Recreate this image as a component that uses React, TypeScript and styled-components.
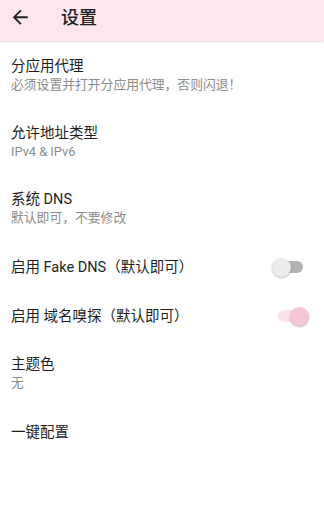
import React, { useState } from 'react';
import styled, { createGlobalStyle } from 'styled-components';

const GlobalStyle = createGlobalStyle`
  html, body {
    margin: 0;
    padding: 0;
    background: #ffffff;
  }
  body {
    font-family: Roboto, "Noto Sans CJK SC", "Noto Sans", sans-serif;
    -webkit-font-smoothing: antialiased;
  }
`;

interface Pref {
  id: string;
  title: string;
  summary?: string;
  toggle?: boolean;
}

const prefs: Pref[] = [
  { id: 'perapp', title: '分应用代理', summary: '必须设置并打开分应用代理，否则闪退！' },
  { id: 'addr', title: '允许地址类型', summary: 'IPv4 & IPv6' },
  { id: 'dns', title: '系统 DNS', summary: '默认即可，不要修改' },
  { id: 'fakedns', title: '启用 Fake DNS（默认即可）', toggle: true },
  { id: 'sniff', title: '启用 域名嗅探（默认即可）', toggle: true },
  { id: 'theme', title: '主题色', summary: '无' },
  { id: 'oneclick', title: '一键配置' },
];

const App: React.FC = () => {
  const [checked, setChecked] = useState<Record<string, boolean>>({
    fakedns: false,
    sniff: true,
  });

  const flip = (id: string) => setChecked((c) => ({ ...c, [id]: !c[id] }));

  return (
    <>
      <GlobalStyle />
      <Screen>
        <Toolbar>
          <BackButton aria-label="back">
            <svg width="22.5" height="22.5" viewBox="0 0 24 24">
              <path
                fill="#1f1f1f"
                d="M20 11H7.83l5.59-5.59L12 4l-8 8 8 8 1.41-1.41L7.83 13H20v-2z"
              />
            </svg>
          </BackButton>
          <ToolbarTitle>设置</ToolbarTitle>
        </Toolbar>

        <List>
          {prefs.map((p) =>
            p.toggle ? (
              <SwitchRow key={p.id} onClick={() => flip(p.id)}>
                <Title>{p.title}</Title>
                <Switch $on={!!checked[p.id]}>
                  <Track $on={!!checked[p.id]} />
                  <Thumb $on={!!checked[p.id]} />
                </Switch>
              </SwitchRow>
            ) : p.summary ? (
              <Row key={p.id}>
                <Title>{p.title}</Title>
                <Summary>{p.summary}</Summary>
              </Row>
            ) : (
              <SingleRow key={p.id}>
                <Title>{p.title}</Title>
              </SingleRow>
            )
          )}
        </List>
      </Screen>
    </>
  );
};

export default App;

const Screen = styled.div`
  width: 324px;
  min-height: 507px;
  background: #ffffff;
`;

const Toolbar = styled.header`
  height: 41px;
  box-sizing: border-box;
  padding: 0 0 6px 9px;
  display: flex;
  align-items: center;
  background: #fde6ee;
  box-shadow: 0 1px 2px rgba(0, 0, 0, 0.14);
  position: relative;
  z-index: 1;
`;

const BackButton = styled.button`
  width: 23px;
  height: 23px;
  padding: 0;
  border: 0;
  background: transparent;
  display: flex;
  align-items: center;
  justify-content: center;
  cursor: pointer;
`;

const ToolbarTitle = styled.h1`
  margin: 0 0 0 29px;
  font-size: 18px;
  line-height: 23px;
  font-weight: 500;
  color: #1f1f1f;
`;

const List = styled.div`
  padding-top: 2px;
  display: flex;
  flex-direction: column;
`;

const Row = styled.div`
  height: 66.5px;
  box-sizing: border-box;
  padding: 13px 11px 0;
  display: flex;
  flex-direction: column;
`;

const SwitchRow = styled.div`
  height: 49px;
  box-sizing: border-box;
  padding: 0 15px 0 11px;
  display: flex;
  align-items: center;
  justify-content: space-between;
  cursor: pointer;
`;

const SingleRow = styled.div`
  height: 50px;
  box-sizing: border-box;
  padding: 0 11px;
  display: flex;
  align-items: center;
`;

const Title = styled.div`
  font-size: 14.5px;
  line-height: 21px;
  color: #1e1e1e;
`;

const Summary = styled.div`
  font-size: 12.8px;
  line-height: 16px;
  color: #8c8c8c;
`;

const Switch = styled.div<{ $on: boolean }>`
  position: relative;
  width: 37px;
  height: 19px;
  flex-shrink: 0;
`;

const Track = styled.div<{ $on: boolean }>`
  position: absolute;
  left: 6px;
  top: 3.5px;
  width: 25px;
  height: 12px;
  border-radius: 6px;
  background: ${(p) => (p.$on ? '#fbe3ec' : '#b2b2b2')};
`;

const Thumb = styled.div<{ $on: boolean }>`
  position: absolute;
  top: 0;
  left: ${(p) => (p.$on ? '18px' : '0')};
  width: 19px;
  height: 19px;
  border-radius: 50%;
  background: ${(p) => (p.$on ? '#f4c6d7' : '#ececec')};
  box-shadow: 0 1px 2px rgba(0, 0, 0, 0.28);
`;
